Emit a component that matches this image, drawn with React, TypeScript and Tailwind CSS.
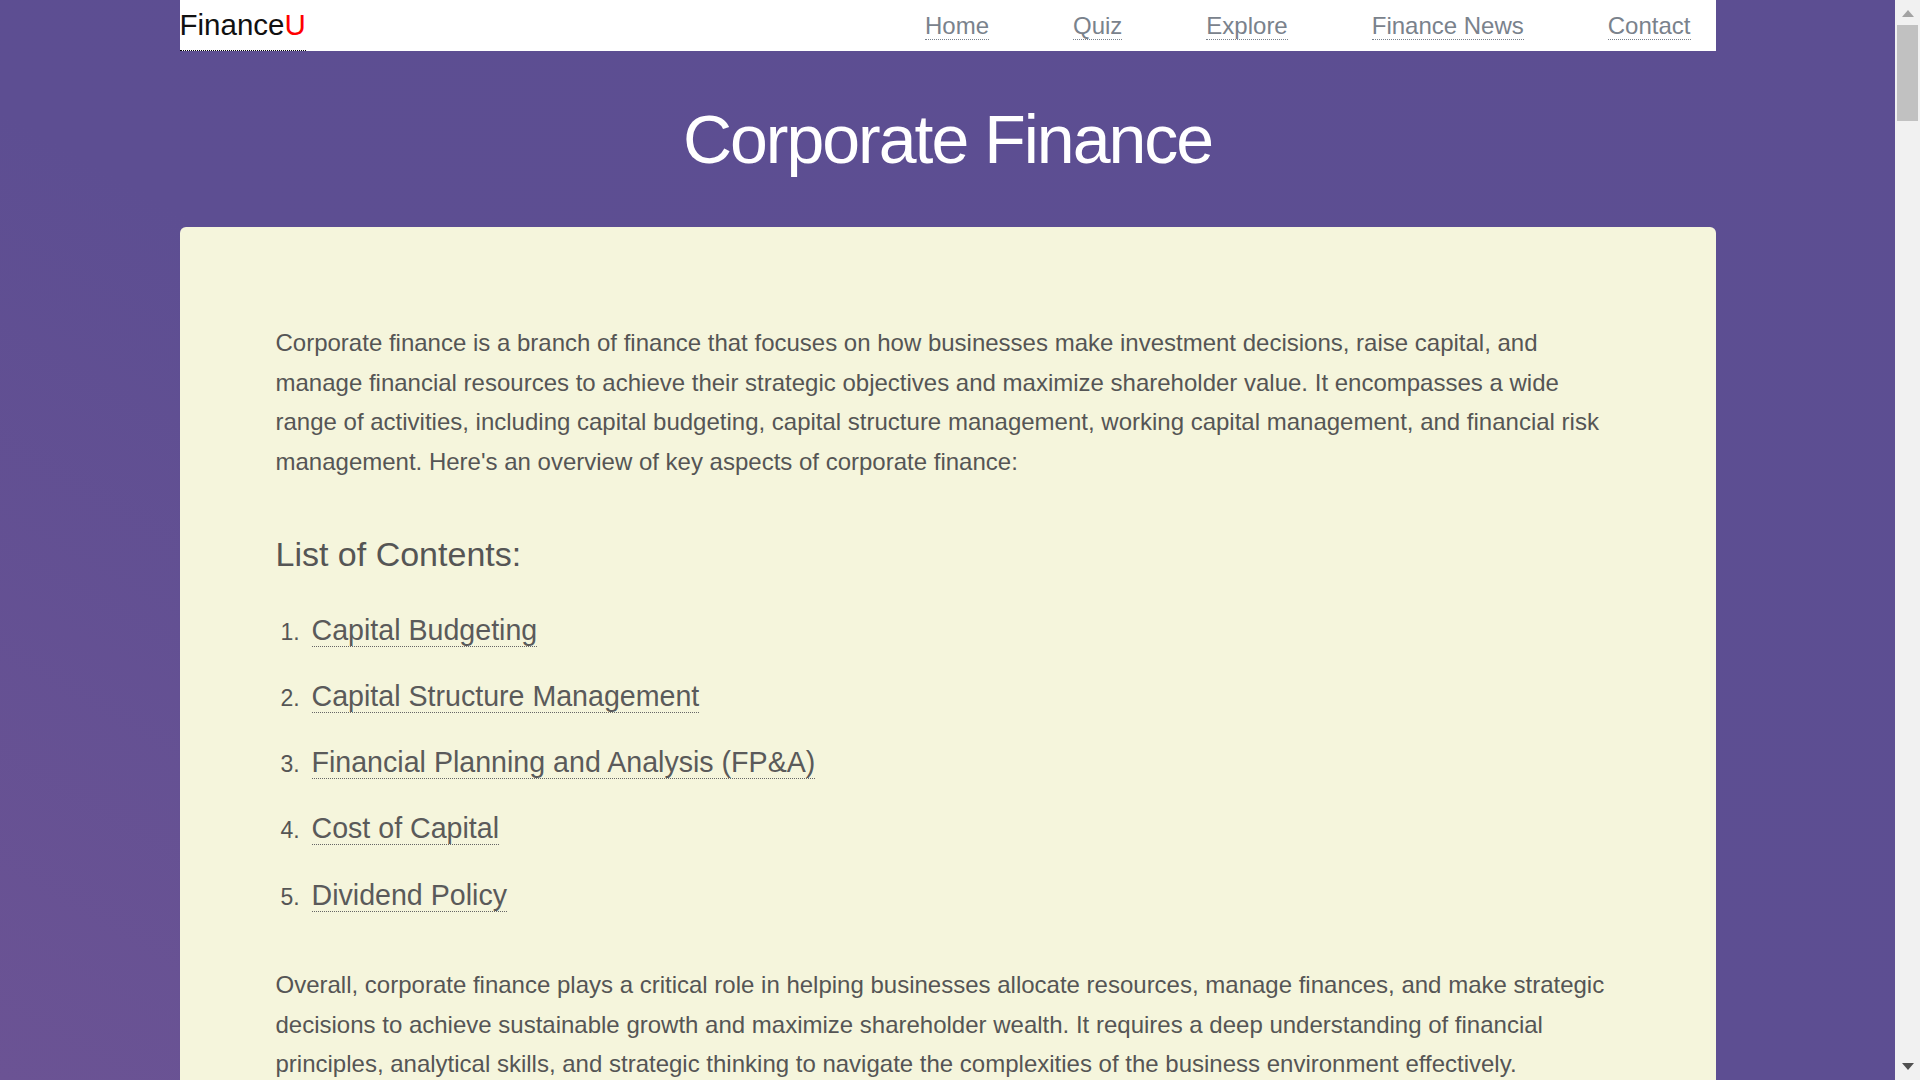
import React from "react";

const navLinks = ["Home", "Quiz", "Explore", "Finance News", "Contact"];

const contents = [
    "Capital Budgeting",
    "Capital Structure Management",
    "Financial Planning and Analysis (FP&A)",
    "Cost of Capital",
    "Dividend Policy",
];

const Scrollbar: React.FC = () => (
    <div className="flex h-screen w-[25px] shrink-0 flex-col items-center bg-[#f1f1f1]">
        <svg width="12" height="7" viewBox="0 0 12 7" className="mt-[10px]">
            <path d="M6 0 L12 7 L0 7 Z" fill="#a3a3a3" />
        </svg>
        <div className="mt-[8px] h-[96px] w-[21px] bg-[#c1c1c1]" />
        <div className="flex-1" />
        <svg width="12" height="7" viewBox="0 0 12 7" className="mb-[10px]">
            <path d="M0 0 L12 0 L6 7 Z" fill="#505050" />
        </svg>
    </div>
);

const App: React.FC = () => {
    return (
        <div className="flex h-screen overflow-hidden font-['Liberation_Sans',Arial,sans-serif]">
            <div className="h-screen flex-1 overflow-y-auto bg-[linear-gradient(to_top_right,#6b5394_0%,#5d4e92_45%,#5c4e92_100%)] [scrollbar-width:none]">
                <div className="mx-auto max-w-[1536px]">
                    <header className="flex h-[51px] items-start justify-between bg-white pr-[25px]">
                        <a href="#" className="block border-b border-dotted border-black text-[29.5px] leading-[50px] text-[#111]">
                            Finance<span className="text-[#ff0000]">U</span>
                        </a>
                        <nav className="flex h-[51px] items-center gap-[84px]">
                            {navLinks.map((link) => (
                                <a
                                    key={link}
                                    href="#"
                                    className="border-b border-dotted border-[#7a828c] text-[24px] leading-[27px] text-[#7a828c]"
                                >
                                    {link}
                                </a>
                            ))}
                        </nav>
                    </header>

                    <h1 className="py-[54px] text-center text-[68px] leading-none tracking-[-2px] text-white">
                        Corporate Finance
                    </h1>

                    <main className="rounded-md bg-[#f5f5dc] p-24 text-[24px] leading-[39.6px] text-[#555]">
                        <p>
                            Corporate finance is a branch of finance that focuses on how businesses make investment decisions, raise capital, and
                            manage financial resources to achieve their strategic objectives and maximize shareholder value. It encompasses a wide
                            range of activities, including capital budgeting, capital structure management, working capital management, and financial risk
                            management. Here's an overview of key aspects of corporate finance:
                        </p>

                        <h2 className="mb-[30px] mt-[53px] text-[34px] leading-[1.2]">List of Contents:</h2>

                        <ol className="mb-[44px] flex flex-col gap-[14.6px]">
                            {contents.map((item, i) => (
                                <li key={item} className="text-[28.6px] leading-[51.5px]">
                                    <span className="inline-block w-[36px] pl-[5px] text-[23px] leading-none">{i + 1}.</span>
                                    <a href="#" className="border-b border-dotted border-[#666] text-[#5a5a5a]">
                                        {item}
                                    </a>
                                </li>
                            ))}
                        </ol>

                        <p>
                            Overall, corporate finance plays a critical role in helping businesses allocate resources, manage finances, and make strategic
                            decisions to achieve sustainable growth and maximize shareholder wealth. It requires a deep understanding of financial
                            principles, analytical skills, and strategic thinking to navigate the complexities of the business environment effectively.
                        </p>
                    </main>
                    <div className="h-12" />
                </div>
            </div>
            <Scrollbar />
        </div>
    );
};

export default App;
